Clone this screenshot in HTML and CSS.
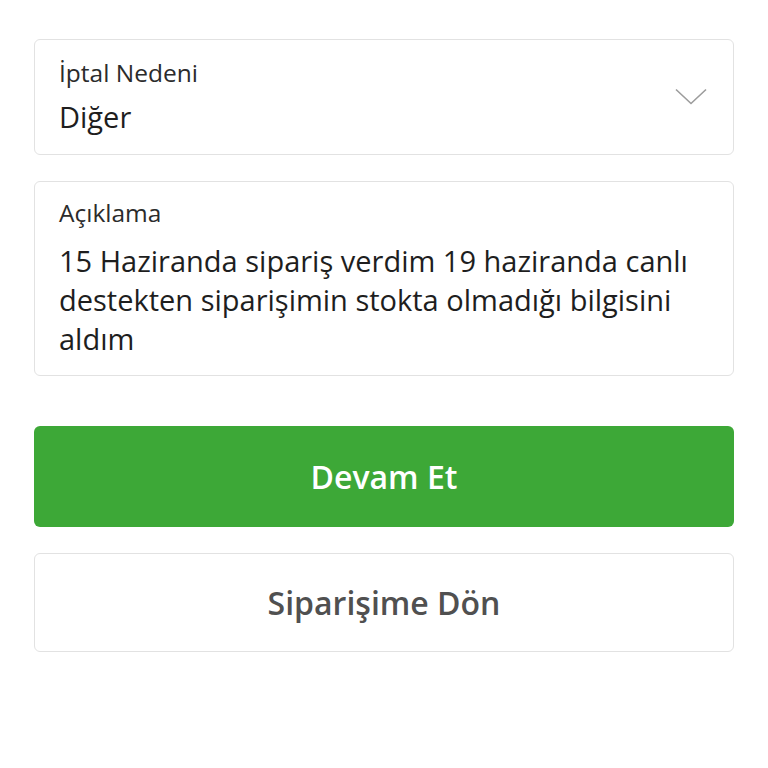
FILE: index.html
```html
<!DOCTYPE html>
<html lang="tr">
<head>
    <meta charset="UTF-8">
    <meta name="viewport" content="width=device-width, initial-scale=1.0">
    <title>Sipariş İptali</title>
    <link rel="stylesheet" href="styles.css">
</head>
<body>
    <div class="container">
        <div class="field select-field">
            <div class="field-body">
                <p class="field-label">İptal Nedeni</p>
                <p class="field-value">Diğer</p>
            </div>
            <svg class="chevron" width="32" height="17" viewBox="0 0 32 17">
                <path d="M1 1.5 L16 15.5 L31 1.5" fill="none" stroke="#9c9c9c" stroke-width="1.6"/>
            </svg>
        </div>
        <div class="field text-field">
            <p class="field-label">Açıklama</p>
            <p class="field-value">15 Haziranda sipariş verdim 19 haziranda canlı destekten siparişimin stokta olmadığı bilgisini aldım</p>
        </div>
        <a class="btn btn-primary" href="#">Devam Et</a>
        <a class="btn btn-secondary" href="#">Siparişime Dön</a>
    </div>
</body>
</html>
```

FILE: styles.css
```css
body {
    font-family: "Open Sans", "Noto Sans", sans-serif;
    margin: 0;
    padding: 0;
    background-color: #fff;
    color: #222;
}
p {
    margin: 0;
}
.container {
    padding: 39px 34px;
    display: flex;
    flex-direction: column;
}
.field {
    border: 1px solid #e2e2e2;
    border-radius: 6px;
    background-color: #fff;
    padding: 0 24px;
}
.select-field {
    display: flex;
    align-items: center;
    justify-content: space-between;
    padding-top: 18px;
    padding-bottom: 17px;
}
.chevron {
    margin-bottom: 3px;
    margin-right: 2px;
}
.text-field {
    margin-top: 26px;
    padding-top: 16px;
    padding-bottom: 17px;
}
.field-label {
    font-size: 24.5px;
    line-height: 30px;
    color: #2b2b2b;
}
.field-value {
    font-size: 29px;
    line-height: 40px;
    color: #1e1e1e;
}
.select-field .field-value {
    margin-top: 9px;
}
.text-field .field-value {
    margin-top: 13px;
    line-height: 39px;
}
.btn {
    display: block;
    height: 101px;
    line-height: 101px;
    border-radius: 6px;
    text-align: center;
    text-decoration: none;
    font-size: 32px;
    font-weight: 600;
}
.btn-primary {
    margin-top: 50px;
    background-color: #3da837;
    color: #fff;
}
.btn-secondary {
    margin-top: 26px;
    height: 97px;
    line-height: 97px;
    border: 1px solid #e2e2e2;
    color: #505050;
}
```
